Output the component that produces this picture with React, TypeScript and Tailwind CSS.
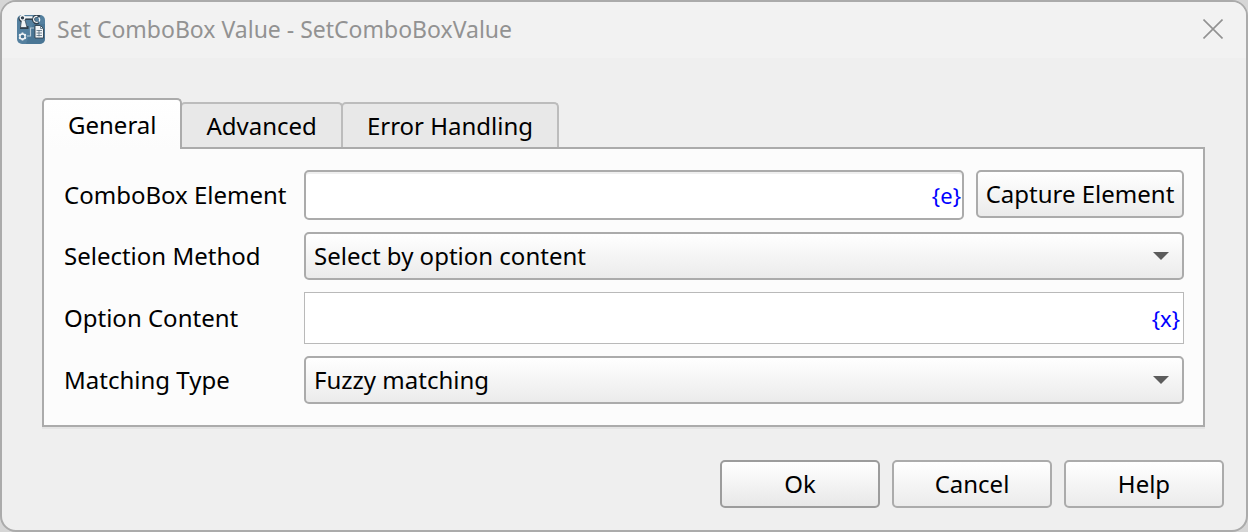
import { useState } from "react";
import type { ReactNode } from "react";

const tabs = ["General", "Advanced", "Error Handling"];

const buttonClass =
  "h-12 rounded-[5px] border-2 border-[#ababab] bg-linear-to-b from-white to-[#ebebeb] text-center";

function AppIcon() {
  return (
    <svg width="28" height="29" viewBox="0 0 28 29" className="shrink-0" aria-hidden="true">
      <rect width="28" height="29" rx="5" fill="#54809f" />
      <path d="M16 9H28V24a5 5 0 0 1-5 5H9Z" fill="#3f6c8c" opacity="0.5" />
      <g fill="none" stroke="#2f3f4d" strokeWidth="3">
        <path d="M3 2.500a2.800 2.800 0 0 0 3 3.500M7 3.500H16M3 12.500H11.500" />
        <path d="M22.500 2a3.500 3.500 0 1 0-1 5.500" />
      </g>
      <path d="M4.500 5H8L10 12.500H3.500Z" fill="#f1f4f6" stroke="#2f3f4d" strokeWidth="0.700" />
      <path d="M7 1.200H15.500V3.400H7Z" fill="#f1f4f6" />
      <circle cx="5.500" cy="2.800" r="2.300" fill="#2f3f4d" stroke="#f1f4f6" strokeWidth="1.300" />
      <path d="M20.500 1.500a3 3 0 1 0 .5 5.500M21.500 2.500c1.500 1 1.500 3 .5 4" fill="none" stroke="#f1f4f6" strokeWidth="1.200" />
      <path d="M10 21H13.500V13H17" fill="none" stroke="#b9cbd8" strokeWidth="1.200" />
      <path d="M5.500 17.500V25.500M2 19.500L9 23.500M9 19.500L2 23.500" stroke="#f1f4f6" strokeWidth="1.700" />
      <circle cx="5.500" cy="21.500" r="2.600" fill="#47718f" stroke="#f1f4f6" strokeWidth="1.500" />
      <path d="M18 10.500H23.500L26.500 13.500V23H18Z" fill="#f1f4f6" stroke="#2f3f4d" strokeWidth="0.900" />
      <path d="M23.500 10.500V13.500H26.500M19.500 15.500H25M19.500 18H25M19.500 20.500H25M22 15V21.500" fill="none" stroke="#526b7e" strokeWidth="0.800" />
    </svg>
  );
}

function Row({ id, label, children }: { id: string; label: string; children: ReactNode }) {
  return (
    <div className="flex items-center">
      <label htmlFor={id} className="w-60 shrink-0 whitespace-nowrap">
        {label}
      </label>
      <div className="flex min-w-0 flex-1 items-start gap-3">{children}</div>
    </div>
  );
}

function Dropdown({ id, options }: { id: string; options: string[] }) {
  return (
    <div className="relative min-w-0 flex-1">
      <select
        id={id}
        className="block h-12 w-full appearance-none rounded-[5px] border-2 border-[#ababab] bg-linear-to-b from-white to-[#ebebeb] pr-12 pl-2"
      >
        {options.map((option) => (
          <option key={option}>{option}</option>
        ))}
      </select>
      <svg
        width="16"
        height="8"
        viewBox="0 0 16 8"
        className="pointer-events-none absolute top-5 right-[15px]"
        aria-hidden="true"
      >
        <path d="M0 0H16L8 8Z" fill="#5c5c5c" />
      </svg>
    </div>
  );
}

export default function App() {
  const [active, setActive] = useState("General");

  return (
    <div className="min-h-screen bg-[#d6d6d6] font-['Noto_Sans',sans-serif] text-[24px] leading-8 text-black">
      <main className="flex min-h-screen flex-col rounded-[16px] border-2 border-[#ababab] bg-[#efefef]">
        <header className="flex h-14 shrink-0 items-center justify-between rounded-t-[14px] bg-[#f2f2f2] pr-[23px] pb-0.5 pl-[15px]">
          <div className="flex items-center gap-3">
            <AppIcon />
            <h1 className="text-[23px] whitespace-nowrap text-[#929292]">
              Set ComboBox Value - SetComboBoxValue
            </h1>
          </div>
          <button type="button" aria-label="Close">
            <svg width="20" height="20" viewBox="0 0 20 20" aria-hidden="true">
              <path d="M0.500 0.500L19.500 19.500M19.500 0.500L0.500 19.500" stroke="#929292" strokeWidth="1.600" />
            </svg>
          </button>
        </header>

        <section className="mt-10 mr-[41px] ml-10">
          <div role="tablist" className="flex items-end">
            {tabs.map((tab) => (
              <button
                key={tab}
                type="button"
                role="tab"
                aria-selected={tab === active}
                onClick={() => setActive(tab)}
                className={
                  tab === active
                    ? "z-10 -mb-0.5 h-[51px] rounded-t-[5px] border-2 border-b-0 border-[#ababab] bg-linear-to-b from-white to-[#fcfcfc] px-6 whitespace-nowrap"
                    : "-ml-0.5 h-[45px] rounded-t-[5px] border-2 border-b-0 border-[#bcbcbc] bg-[#e8e8e8] px-6 whitespace-nowrap"
                }
              >
                {tab}
              </button>
            ))}
          </div>

          <div
            role="tabpanel"
            className="flex flex-col gap-3 border-2 border-[#ababab] bg-[#fcfcfc] py-[21px] pr-[19px] pl-5 shadow-[0_2px_0_#e4e4e4]"
          >
            <Row id="element" label="ComboBox Element">
              <div className="flex h-[50px] min-w-0 flex-1 items-center rounded-[5px] border-2 border-[#ababab] bg-white pr-px shadow-[inset_0_2px_0_#efefef]">
                <input id="element" type="text" className="h-full min-w-0 flex-1 bg-transparent px-2 outline-none" />
                <button type="button" className="text-[22px] leading-9 text-[#0000ff]">
                  {"{e}"}
                </button>
              </div>
              <button type="button" className={`${buttonClass} w-52 shrink-0 whitespace-nowrap`}>
                Capture Element
              </button>
            </Row>
            <Row id="method" label="Selection Method">
              <Dropdown id="method" options={["Select by option content", "Select by option index"]} />
            </Row>
            <Row id="content" label="Option Content">
              <div className="flex h-[52px] min-w-0 flex-1 items-center border border-[#b9b9b9] bg-white pr-[3px]">
                <input id="content" type="text" className="h-full min-w-0 flex-1 bg-transparent px-2 outline-none" />
                <button type="button" className="text-[22px] leading-9 text-[#0000ff]">
                  {"{x}"}
                </button>
              </div>
            </Row>
            <Row id="matching" label="Matching Type">
              <Dropdown id="matching" options={["Fuzzy matching", "Exact matching"]} />
            </Row>
          </div>
        </section>

        <footer className="mt-[33px] flex justify-end gap-3 pr-[22px] pb-[22px]">
          <button type="button" className="h-12 w-40 rounded-[5px] border-2 border-[#9c9c9c] bg-linear-to-b from-white to-[#e8e8e8]">
            Ok
          </button>
          <button type="button" className={`${buttonClass} w-40`}>
            Cancel
          </button>
          <button type="button" className={`${buttonClass} w-40`}>
            Help
          </button>
        </footer>
      </main>
    </div>
  );
}
